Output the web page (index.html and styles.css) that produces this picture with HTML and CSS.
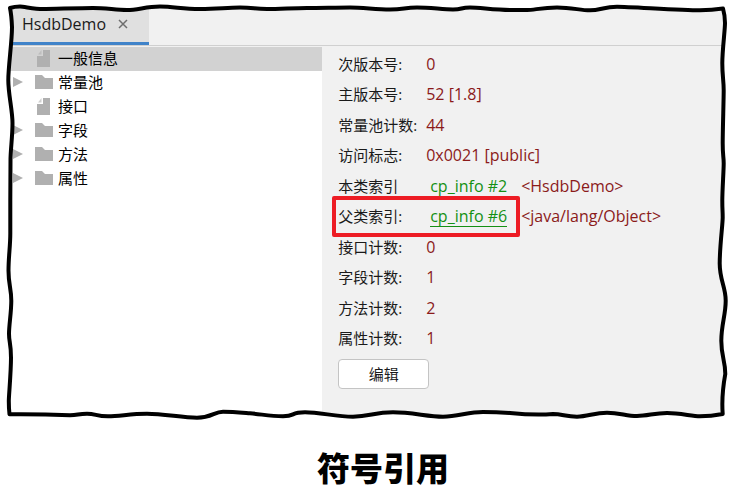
FILE: index.html
```
<!DOCTYPE html>
<html lang="zh-CN">

<head>
    <meta charset="UTF-8">
    <meta name="viewport" content="width=device-width, initial-scale=1.0">
    <title>符号引用</title>
    <link rel="stylesheet" href="styles.css">
</head>

<body>
    <svg class="sprite" aria-hidden="true">
        <symbol id="icon-file" viewBox="0 0 18 18">
            <path d="M8 1h7v17H2V7h6z" />
            <path d="M3 5.500L6.500 1v4.500z" opacity="0.6" />
        </symbol>
        <symbol id="icon-folder" viewBox="0 0 18 18">
            <path d="M0 2h7l3 3h8v11H0z" />
        </symbol>
        <symbol id="icon-arrow" viewBox="0 0 10 12">
            <path d="M0 1l10 5-10 5z" />
        </symbol>
    </svg>

    <figure class="figure">
        <div class="frame">
            <div class="window">
                <div class="tabs">
                    <div class="tab">
                        <span>HsdbDemo</span>
                        <button type="button" class="close" aria-label="关闭">
                            <svg viewBox="0 0 10 10"><path d="M1 1l8 8M9 1l-8 8" /></svg>
                        </button>
                    </div>
                </div>
                <div class="content">
                    <ul class="tree">
                        <li class="node selected"><span class="arrow"></span><svg class="icon"><use href="#icon-file" /></svg>一般信息</li>
                        <li class="node"><svg class="arrow"><use href="#icon-arrow" /></svg><svg class="icon"><use href="#icon-folder" /></svg>常量池</li>
                        <li class="node"><span class="arrow"></span><svg class="icon"><use href="#icon-file" /></svg>接口</li>
                        <li class="node"><svg class="arrow"><use href="#icon-arrow" /></svg><svg class="icon"><use href="#icon-folder" /></svg>字段</li>
                        <li class="node"><svg class="arrow"><use href="#icon-arrow" /></svg><svg class="icon"><use href="#icon-folder" /></svg>方法</li>
                        <li class="node"><svg class="arrow"><use href="#icon-arrow" /></svg><svg class="icon"><use href="#icon-folder" /></svg>属性</li>
                    </ul>
                    <div class="details">
                        <dl class="info">
                            <div class="row"><dt>次版本号:</dt><dd>0</dd></div>
                            <div class="row"><dt>主版本号:</dt><dd>52 [1.8]</dd></div>
                            <div class="row"><dt>常量池计数:</dt><dd>44</dd></div>
                            <div class="row"><dt>访问标志:</dt><dd>0x0021 [public]</dd></div>
                            <div class="row"><dt>本类索引</dt><dd><a href="#cp2" class="link">cp_info #2</a>&lt;HsdbDemo&gt;</dd></div>
                            <div class="row marked"><dt>父类索引:</dt><dd><a href="#cp6" class="link underlined">cp_info #6</a>&lt;java/lang/Object&gt;</dd></div>
                            <div class="row"><dt>接口计数:</dt><dd>0</dd></div>
                            <div class="row"><dt>字段计数:</dt><dd>1</dd></div>
                            <div class="row"><dt>方法计数:</dt><dd>2</dd></div>
                            <div class="row"><dt>属性计数:</dt><dd>1</dd></div>
                        </dl>
                        <button type="button" class="edit">编辑</button>
                    </div>
                </div>
            </div>
            <!-- hand drawn border, the first path hides what sticks out of it -->
            <svg class="sketch" viewBox="0 0 743 422" preserveAspectRatio="none" aria-hidden="true">
                <path class="outside" d="M0 0H743V422H0ZM10 8L20 6.500L43 9L127 10L160 6.500L200 9L240 7.500L267 9L350 7.500L390 9.500L417 7.500L453 9.500L470 7.500L510 10L527 10L557 7.500L590 10.300L617 6.700L700 10.300L723 8.500L725 23L722.300 63L723.700 90L722.700 143L723.700 163L722.300 217L719.700 263L725.700 300L721.300 340L725.300 373L722.300 413L700 415.300L667 412L637 415L607 411.700L577 415.700L553 413L483 411L443 415.700L393 411.300L353 415.700L305 411.300L283 415.300L223 410.700L197 416.700L147 412.700L108 415.300L87 412.700L70 414.300L9.500 413.300L8.800 400L11 357L9 333L11.300 300L8.500 270L10.300 233L10.500 160L12.500 123L8.300 80L12 27Z" />
                <path class="stroke" d="M10 8C13 7 16 6.500 20 6.500S34 9 43 9S80 8 93 8S116 10 127 10S146 6.500 160 6.500S182 9 200 9S226 7.500 240 7.500S254 9 267 9S294 8 307 8S337 7.500 350 7.500S376 9.500 390 9.500S404 7.500 417 7.500S443 9.500 453 9.500S460 7.500 470 7.500S494 10 510 10S520 10 527 10S542 7.500 557 7.500S580 10.300 590 10.300S604 6.700 617 6.700S680 10.300 700 10.300Q712 10 723 8.500C724 12 725 16 725 23S722.300 50 722.300 63S723.700 80 723.700 90S722.700 130 722.700 143S723.700 156 723.700 163S722.300 190 722.300 200S722.700 210 722.700 217S719.700 246 719.700 263S725.700 286 725.700 300S721.300 324 721.300 340S725.300 360 725.300 373Q721.300 395 722.700 413C715 414.500 708 415.300 700 415.300S680 412 667 412S648 415 637 415S620 411.700 607 411.700S588 415.700 577 415.700S562 413 553 413Q535 414.500 510 412Q496 411 483 411C468 411 458 415.700 443 415.700S412 411.300 393 411.300S370 415.700 353 415.700S320 411.300 305 411.300S296 415.300 283 415.300S262 413.300 250 412.300S232 410.700 223 410.700S212 416.700 197 416.700S164 412.700 147 412.700S120 415.300 108 415.300S96 412.700 87 412.700S78 414.300 70 414.300Q40 413 9.500 413.300C9 409 8.800 405 8.800 400S11 372 11 357S9 342 9 333S11.300 312 11.300 300S8.500 284 8.500 270S10.300 246 10.300 233S10.300 210 10.300 200S10.500 170 10.500 160S12.500 136 12.500 123S8.300 94 8.300 80S12 42 12 27Q11.500 15 10 8Z" />
            </svg>
        </div>
        <figcaption class="caption">符号引用</figcaption>
    </figure>
</body>

</html>
```

FILE: styles.css
```
*,
*::after {
    box-sizing: border-box;
}

body {
    margin: 0;
    background-color: #fff;
    color: #1a1a1a;
    font-family: "Open Sans", "Noto Sans CJK SC", sans-serif;
    font-size: 15px;
    line-height: 24px;
}

button {
    font: inherit;
    color: inherit;
    cursor: pointer;
}

.sprite {
    display: none;
}

.figure {
    margin: 0;
}

.frame {
    position: relative;
    padding: 6px 16px 6px 8px;
}

.window {
    display: flex;
    flex-direction: column;
    background-color: #f1f1f1;
}

.tabs {
    display: flex;
    border-bottom: 1px solid #d0d0d0;
}

.tab {
    display: flex;
    align-items: center;
    gap: 12px;
    padding: 6px 21px 6px 14px;
    background-color: #e0e0e0;
    border-bottom: 3px solid #4083c9;
    font-size: 16px;
}

.close {
    display: flex;
    padding: 0;
    border: none;
    background: none;
}

.close svg {
    width: 10px;
    height: 10px;
    fill: none;
    stroke: #6e6e6e;
    stroke-width: 1.5;
}

.content {
    display: flex;
    padding-top: 1px;
}

.tree {
    width: 43.7%;
    margin: 0;
    padding: 0;
    background-color: #fff;
    color: #000;
    list-style: none;
}

.node {
    display: flex;
    align-items: center;
    height: 24px;
    padding: 0 0 2px 5px;
}

.selected {
    background-color: #d2d2d2;
}

.arrow {
    width: 10px;
    height: 12px;
    margin-right: 12px;
    fill: #b0b0b0;
}

.icon {
    width: 18px;
    height: 18px;
    margin-right: 5px;
    fill: #b0b0b0;
}

.details {
    flex: 1;
    padding: 2px 16px 28px;
}

.info {
    margin: 0;
}

.row {
    position: relative;
    display: flex;
    padding: 3px 0;
    white-space: nowrap;
}

.row:nth-child(even) {
    padding-bottom: 4px;
}

dt {
    width: 88px;
}

dd {
    margin: 0;
    color: #8b1a1a;
    font-size: 16px;
}

.link {
    display: inline-block;
    margin: 0 14px 0 4px;
    color: #149014;
    line-height: 20px;
    text-decoration: none;
}

.underlined {
    border-bottom: 1px solid #149014;
}

/* red box round the row */
.marked::after {
    content: "";
    position: absolute;
    top: -5px;
    left: -6px;
    width: 188px;
    height: 41px;
    border: 4px solid #ed1c24;
    border-radius: 2px;
}

.edit {
    display: block;
    width: 91px;
    height: 30px;
    margin-top: 5px;
    padding: 0;
    border: 1px solid #c4c4c4;
    border-radius: 4px;
    background-color: #fff;
}

.sketch {
    position: absolute;
    inset: 0;
    width: 100%;
    height: 100%;
    pointer-events: none;
}

.outside {
    fill: #fff;
    fill-rule: evenodd;
}

.stroke {
    fill: none;
    stroke: #000;
    stroke-width: 4;
    stroke-linejoin: round;
}

.caption {
    padding: 20px 0 0 23px;
    color: #000;
    font-family: "Noto Sans CJK SC", sans-serif;
    font-size: 33px;
    font-weight: 900;
    line-height: 48px;
    text-align: center;
}
```
